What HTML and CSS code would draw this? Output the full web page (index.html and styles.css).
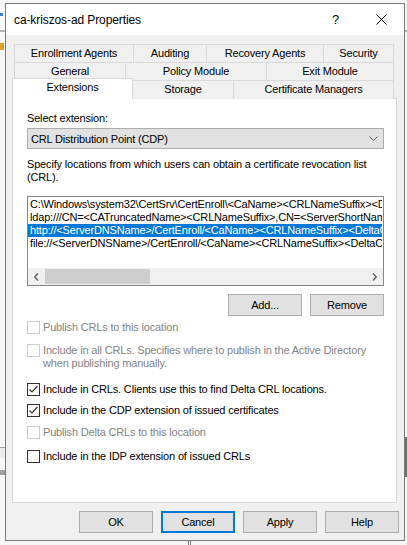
FILE: index.html
```html
<!DOCTYPE html>
<html lang="en">

<head>
  <title>ca-kriszos-ad Properties</title>
  <link rel="stylesheet" href="styles.css">
</head>

<body>

  <div class="desktop">
    <!-- bits of the windows behind the dialog -->
    <div class="behind behind-left-top"></div>
    <div class="behind behind-left-icon"></div>
    <div class="behind behind-left-line"></div>
    <div class="behind behind-right-line"></div>
    <div class="behind behind-left-band"></div>
    <div class="behind behind-left-block"></div>
    <div class="behind behind-right-bar"></div>
    <div class="behind behind-bottom-tick"></div>

    <div class="dialog">
      <div class="titlebar">
        <span class="title">ca-kriszos-ad Properties</span>
        <span class="title-help">?</span>
        <span class="title-close">
          <svg width="11" height="11" viewBox="0 0 11 11">
            <path d="M0.5 0.5 L10.5 10.5 M10.5 0.5 L0.5 10.5" stroke="#000" stroke-width="1" fill="none" />
          </svg>
        </span>
      </div>

      <div class="content">
        <div class="tabs">
          <div class="tab-row row-top">
            <div class="tab">Enrollment Agents</div>
            <div class="tab">Auditing</div>
            <div class="tab">Recovery Agents</div>
            <div class="tab">Security</div>
          </div>
          <div class="tab-row row-mid">
            <div class="tab">General</div>
            <div class="tab">Policy Module</div>
            <div class="tab">Exit Module</div>
          </div>
          <div class="tab-row row-front">
            <div class="tab tab-active">Extensions</div>
            <div class="tab">Storage</div>
            <div class="tab">Certificate Managers</div>
          </div>
        </div>

        <div class="panel">
          <div class="label">Select extension:</div>
          <div class="dropdown">
            <span>CRL Distribution Point (CDP)</span>
            <svg width="9" height="5" viewBox="0 0 9 5">
              <path d="M0.5 0.5 L4.5 4.5 L8.5 0.5" stroke="#606060" stroke-width="1" fill="none" />
            </svg>
          </div>

          <p class="description">Specify locations from which users can obtain a certificate revocation list (CRL).</p>

          <div class="listbox">
            <div class="list-items">
              <div class="list-item">C:\Windows\system32\CertSrv\CertEnroll\&lt;CaName&gt;&lt;CRLNameSuffix&gt;&lt;DeltaCRLAllowed&gt;.crl</div>
              <div class="list-item">ldap:///CN=&lt;CATruncatedName&gt;&lt;CRLNameSuffix&gt;,CN=&lt;ServerShortName&gt;,CN=CDP,CN=Public Key Services,CN=Services,&lt;ConfigurationContainer&gt;</div>
              <div class="list-item selected">http://&lt;ServerDNSName&gt;/CertEnroll/&lt;CaName&gt;&lt;CRLNameSuffix&gt;&lt;DeltaCRLAllowed&gt;.crl</div>
              <div class="list-item">file://&lt;ServerDNSName&gt;/CertEnroll/&lt;CaName&gt;&lt;CRLNameSuffix&gt;&lt;DeltaCRLAllowed&gt;.crl</div>
            </div>
            <div class="hscroll">
              <div class="scroll-arrow">
                <svg width="5" height="8" viewBox="0 0 5 8">
                  <path d="M4 0.5 L0.8 4 L4 7.5" stroke="#606060" stroke-width="1.4" fill="none" />
                </svg>
              </div>
              <div class="scroll-track">
                <div class="scroll-thumb"></div>
              </div>
              <div class="scroll-arrow">
                <svg width="5" height="8" viewBox="0 0 5 8">
                  <path d="M1 0.5 L4.2 4 L1 7.5" stroke="#606060" stroke-width="1.4" fill="none" />
                </svg>
              </div>
            </div>
          </div>

          <div class="list-buttons">
            <button class="btn">Add...</button>
            <button class="btn">Remove</button>
          </div>

          <label class="check check-1 disabled">
            <span class="box"></span>
            <span>Publish CRLs to this location</span>
          </label>
          <label class="check check-2 disabled">
            <span class="box"></span>
            <span>Include in all CRLs. Specifies where to publish in the Active Directory when publishing manually.</span>
          </label>
          <label class="check check-3">
            <span class="box">
              <svg width="11" height="11" viewBox="0 0 11 11">
                <path d="M1.5 5.5 L4 8 L9.5 2" stroke="#333" stroke-width="1.2" fill="none" />
              </svg>
            </span>
            <span>Include in CRLs. Clients use this to find Delta CRL locations.</span>
          </label>
          <label class="check check-4">
            <span class="box">
              <svg width="11" height="11" viewBox="0 0 11 11">
                <path d="M1.5 5.5 L4 8 L9.5 2" stroke="#333" stroke-width="1.2" fill="none" />
              </svg>
            </span>
            <span>Include in the CDP extension of issued certificates</span>
          </label>
          <label class="check check-5 disabled">
            <span class="box"></span>
            <span>Publish Delta CRLs to this location</span>
          </label>
          <label class="check check-6">
            <span class="box"></span>
            <span>Include in the IDP extension of issued CRLs</span>
          </label>
        </div>

        <div class="actions">
          <button class="btn">OK</button>
          <button class="btn btn-default">Cancel</button>
          <button class="btn">Apply</button>
          <button class="btn">Help</button>
        </div>
      </div>
    </div>
  </div>

</body>

</html>
```

FILE: styles.css
```css
body {
  margin: 0;
  background-color: #f7f7f7;
  font-family: "Liberation Sans", Arial, sans-serif;
  font-size: 11px;
  letter-spacing: -0.17px;
  color: #000;
  overflow: hidden;
}

.desktop {
  position: relative;
  width: 407px;
  height: 545px;
}

.behind {
  position: absolute;
}

.behind-left-top {
  left: 0;
  top: 13px;
  width: 3px;
  height: 3px;
  background-color: #3a7fd0;
}

.behind-left-line {
  left: 0;
  top: 30px;
  width: 5px;
  height: 2px;
  background-color: #b4b4b4;
}

.behind-left-icon {
  left: 0;
  top: 43px;
  width: 4px;
  height: 7px;
  background-color: #e0a030;
}

.behind-right-line {
  right: 0;
  top: 30px;
  width: 3px;
  height: 2px;
  background-color: #b4b4b4;
}

.behind-left-band {
  left: 0;
  top: 447px;
  width: 5px;
  height: 10px;
  border-top: 1px solid #a0a0a0;
  background-color: #ececec;
}

.behind-left-block {
  left: 0;
  top: 470px;
  width: 5px;
  height: 5px;
  background-color: #a0a0a0;
}

.behind-right-bar {
  right: 0;
  top: 437px;
  width: 2px;
  height: 40px;
  background-color: #707070;
}

.behind-bottom-tick {
  left: 188px;
  top: 541px;
  width: 1px;
  height: 4px;
  border-right: 1px solid #777;
  border-left: 1px solid #777;
}

.dialog {
  position: absolute;
  left: 5px;
  top: 3px;
  width: 400px;
  height: 538px;
  box-sizing: border-box;
  border: 1px solid #7a7a7a;
  background-color: #f0f0f0;
  display: flex;
  flex-direction: column;
}

.titlebar {
  height: 31px;
  background-color: #fff;
  display: flex;
  align-items: center;
  font-size: 12px;
  letter-spacing: -0.1px;
}

.title {
  padding-left: 8px;
  flex: 1;
}

.title-help {
  width: 14px;
  margin-right: 30px;
  font-size: 13px;
}

.title-close {
  width: 11px;
  height: 11px;
  margin-right: 17px;
  display: flex;
}

.content {
  flex: 1;
  padding: 9px 5px 0 6px;
}

.tabs {
  margin-left: 2px;
  width: 380px;
}

.tab-row {
  display: grid;
  height: 18px;
}

.row-top {
  grid-template-columns: 120px 73px 117px 70px;
}

.row-mid {
  grid-template-columns: 112px 141px 127px;
}

.row-front {
  grid-template-columns: 119px 101px 160px;
}

.tab {
  box-sizing: border-box;
  border-top: 1px solid #d9d9d9;
  border-right: 1px solid #d9d9d9;
  text-align: center;
  line-height: 17px;
  background-color: #f0f0f0;
}

.tab:first-child {
  border-left: 1px solid #d9d9d9;
}

.tab-active {
  position: relative;
  z-index: 1;
  margin-left: -2px;
  margin-top: -2px;
  height: 21px;
  background-color: #fff;
  line-height: 17px;
}

.panel {
  box-sizing: border-box;
  width: 385px;
  height: 405px;
  border: 1px solid #d9d9d9;
  background-color: #fff;
  padding: 13px 12px 0 14px;
}

.label {
  line-height: 13px;
}

.dropdown {
  margin-top: 3px;
  height: 21px;
  box-sizing: border-box;
  border: 1px solid #adadad;
  background-color: #e1e1e1;
  display: flex;
  align-items: center;
  justify-content: space-between;
  padding: 0 5px 0 3px;
}

.description {
  margin: 9px 0 0;
  line-height: 13px;
}

.listbox {
  margin-top: 12px;
  height: 90px;
  box-sizing: border-box;
  border: 1px solid #828790;
  display: flex;
  flex-direction: column;
}

.list-items {
  flex: 1;
  overflow: hidden;
  padding-top: 1px;
}

.list-item {
  white-space: nowrap;
  line-height: 13px;
  padding-left: 2px;
  margin-right: 1px;
  overflow: hidden;
}

.list-item.selected {
  background-color: #0078d7;
  color: #fff;
}

.hscroll {
  height: 17px;
  display: flex;
  background-color: #f0f0f0;
}

.scroll-arrow {
  width: 17px;
  display: flex;
  align-items: center;
  justify-content: center;
}

.scroll-track {
  flex: 1;
  padding: 1px 0;
}

.scroll-thumb {
  width: 105px;
  height: 100%;
  background-color: #cdcdcd;
}

.btn {
  width: 74px;
  height: 22px;
  box-sizing: border-box;
  border: 1px solid #adadad;
  background-color: #e1e1e1;
  font-family: inherit;
  font-size: 11px;
  letter-spacing: inherit;
  color: #000;
  padding: 0;
}

.btn-default {
  border: 2px solid #0078d7;
}

.list-buttons {
  margin-top: 8px;
  display: flex;
  justify-content: flex-end;
  gap: 8px;
}

.check {
  display: flex;
  align-items: flex-start;
  gap: 3px;
  line-height: 13px;
}

.box {
  flex: none;
  width: 13px;
  height: 13px;
  box-sizing: border-box;
  border: 1px solid #333;
  display: flex;
  align-items: center;
  justify-content: center;
}

.disabled {
  color: #838383;
}

.disabled .box {
  border-color: #cccccc;
}

.check-1 {
  margin-top: 5px;
}

.check-2 {
  margin-top: 10px;
}

.check-3 {
  margin-top: 13px;
}

.check-4 {
  margin-top: 8px;
}

.check-5 {
  margin-top: 9px;
}

.check-6 {
  margin-top: 11px;
}

.actions {
  margin-top: 8px;
  display: flex;
  justify-content: flex-end;
  gap: 8px;
}
```
